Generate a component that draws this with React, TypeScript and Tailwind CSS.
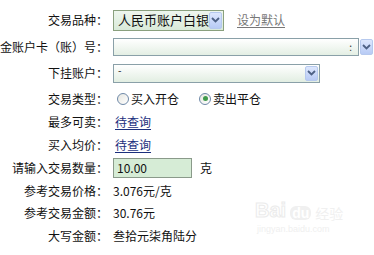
import React from "react";

const font = { fontFamily: '"Noto Sans CJK SC", "Noto Sans", sans-serif' };

function DropBtn({ className = "" }: { className?: string }) {
  return (
    <div
      className={`flex items-center justify-center border border-[#b6c9ee] bg-gradient-to-b from-[#dde7fd] to-[#b8cbf5] rounded-[2px] ${className}`}
    >
      <svg width="9" height="6" viewBox="0 0 9 6">
        <path d="M1 1 L4.5 4.5 L8 1" fill="none" stroke="#4d6185" strokeWidth="1.8" />
      </svg>
    </div>
  );
}

function Row({ label, h, children }: { label: string; h: string; children?: React.ReactNode }) {
  return (
    <div className={`flex items-center ${h}`}>
      <div className="w-[108px] shrink-0 text-right text-[12px] text-[#111] whitespace-nowrap">{label}</div>
      <div className="ml-[5px] flex items-center flex-1 min-w-0">{children}</div>
    </div>
  );
}

function Radio({ checked }: { checked?: boolean }) {
  return (
    <span className="inline-flex items-center justify-center w-[12px] h-[12px] rounded-full border border-[#6f89a8] bg-gradient-to-br from-[#e6e6e0] to-white">
      {checked && <span className="w-[5px] h-[5px] rounded-full bg-[#3f9a4b]" />}
    </span>
  );
}

export default function App() {
  return (
    <div className="relative w-[374px] h-[255px] bg-white overflow-hidden" style={font}>
      {/* watermark */}
      <div className="absolute left-[255px] top-[200px] select-none pointer-events-none">
        <div className="flex items-end gap-[4px] leading-none">
          <span className="text-[20px] font-bold text-white [-webkit-text-stroke:1px_#ebebeb]" style={{ fontFamily: '"Liberation Sans", sans-serif' }}>
            Bai
          </span>
          <span className="text-[14px] font-bold text-white bg-[#f0f0f0] rounded-[6px] px-[2px]" style={{ fontFamily: '"Liberation Sans", sans-serif' }}>
            du
          </span>
          <span className="text-[14px] text-[#f0f0f0]">经验</span>
        </div>
        <div className="text-[9px] text-[#efefef] mt-[3px] ml-[2px]" style={{ fontFamily: '"Liberation Sans", sans-serif' }}>
          jingyan.baidu.com
        </div>
      </div>

      <div className="relative pt-[7px]">
        <Row label="交易品种：" h="h-[26px]">
          <div className="flex items-center w-[111px] h-[21px] border border-[#8aa07e] bg-gradient-to-b from-[#eef6ee] to-[#d9ead9] pl-[4px] pr-[1px]">
            <span className="text-[13px] text-[#111] flex-1 whitespace-nowrap">人民币账户白银</span>
            <DropBtn className="w-[13px] h-[17px]" />
          </div>
          <span className="ml-[13px] text-[12px] text-[#777] underline underline-offset-2">设为默认</span>
        </Row>
        <Row label="金账户卡（账）号：" h="h-[27px]">
          <div className="flex items-center w-[246px] h-[18px] border border-[#8aa0a8] bg-gradient-to-b from-white to-[#e4efe4] pr-[1px] justify-end">
            <span className="text-[10px] text-[#333] mr-[5px] leading-none">:</span>
          </div>
          <DropBtn className="ml-[1px] w-[13px] h-[16px]" />
        </Row>
        <Row label="下挂账户：" h="h-[26px]">
          <div className="flex items-center w-[207px] h-[19px] border border-[#8aa0a8] bg-gradient-to-b from-white to-[#e2eee2] pl-[4px] pr-[1px]">
            <span className="text-[10px] text-[#111] flex-1 leading-none -mt-[6px]">-</span>
            <DropBtn className="w-[13px] h-[15px]" />
          </div>
        </Row>
        <Row label="交易类型：" h="h-[25px]">
          <span className="ml-[4px] flex"><Radio /></span>
          <span className="ml-[2px] text-[12px] text-[#111]">买入开仓</span>
          <span className="ml-[20px] flex"><Radio checked /></span>
          <span className="ml-[2px] text-[12px] text-[#111]">卖出平仓</span>
        </Row>
        <Row label="最多可卖：" h="h-[22px]">
          <span className="ml-[2px] text-[12px] text-[#1b2f7d] underline underline-offset-2">待查询</span>
        </Row>
        <Row label="买入均价：" h="h-[23px]">
          <span className="ml-[2px] text-[12px] text-[#1b2f7d] underline underline-offset-2">待查询</span>
        </Row>
        <Row label="请输入交易数量：" h="h-[23px]">
          <div className="flex items-center w-[79px] h-[20px] border border-[#8a9a8a] bg-[#d6ecd6] pl-[3px]">
            <span className="text-[12px] text-[#111]">10.00</span>
          </div>
          <span className="ml-[8px] text-[12px] text-[#111]">克</span>
        </Row>
        <Row label="参考交易价格：" h="h-[23px]">
          <span className="text-[12px] text-[#111]">3.076元/克</span>
        </Row>
        <Row label="参考交易金额：" h="h-[22px]">
          <span className="text-[12px] text-[#111]">30.76元</span>
        </Row>
        <Row label="大写金额：" h="h-[23px]">
          <span className="text-[12px] text-[#111]">叁拾元柒角陆分</span>
        </Row>
      </div>
    </div>
  );
}
